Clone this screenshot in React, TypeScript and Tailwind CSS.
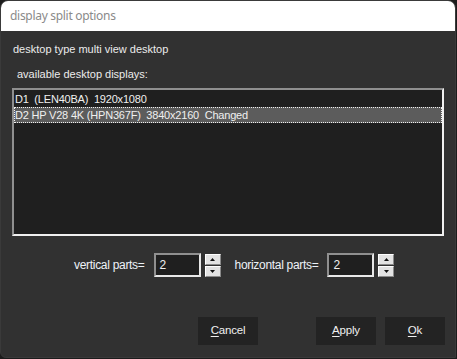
import React from "react";

function Spin() {
  return (
    <div className="flex flex-col gap-[1px] ml-[4px]">
      <div className="w-[16px] h-[11px] bg-[#e3e3e3] border-t border-l border-[#ffffff] border-r border-b border-r-[#8a8a8a] border-b-[#8a8a8a] flex items-center justify-center">
        <svg width="5" height="3" viewBox="0 0 5 3"><path d="M2.5 0 L5 3 L0 3 Z" fill="#111" /></svg>
      </div>
      <div className="w-[16px] h-[11px] bg-[#e3e3e3] border-t border-l border-[#ffffff] border-r border-b border-r-[#8a8a8a] border-b-[#8a8a8a] flex items-center justify-center">
        <svg width="5" height="3" viewBox="0 0 5 3"><path d="M0 0 L5 0 L2.5 3 Z" fill="#111" /></svg>
      </div>
    </div>
  );
}

function NumBox() {
  return (
    <div className="w-[47px] h-[24px] bg-[#1f1f1f] border-2 border-t-[#8f8f8f] border-l-[#8f8f8f] border-r-[#e8e8e8] border-b-[#e8e8e8] flex items-center pl-[4px] text-[12px] text-[#f0f0f0]">
      2
    </div>
  );
}

function Btn({ u, rest }: { u: string; rest: string }) {
  return (
    <div className="w-[60px] h-[28px] bg-[#232323] flex items-center justify-center text-[11.5px] text-[#f0f0f0] tracking-[-0.2px]">
      <span><span className="underline underline-offset-2">{u}</span>{rest}</span>
    </div>
  );
}

export default function App() {
  return (
    <div className="w-[457px] h-[359px] bg-[#1c1c1c]" style={{ fontFamily: "'Liberation Sans', sans-serif" }}>
      <div className="w-[456px] h-[358px] rounded-tr-[8px] rounded-tl-[8px] rounded-bl-[6px] overflow-hidden bg-[#313131] border border-[#3a3a3a] flex flex-col">
        <div className="h-[30px] bg-white flex items-center pl-[9px] text-[12px] text-[#8a8a8a]" style={{ fontFamily: "'Noto Sans', sans-serif" }}>
          <span className="tracking-[-0.3px]">display split options</span>
        </div>
        <div className="flex flex-col px-[11px] pt-[11px] text-[11px] text-[#ececec]">
          <div className="h-[14px] leading-[14px] pl-[1px]">desktop type multi view desktop</div>
          <div className="h-[14px] leading-[14px] mt-[11px] ml-[5px]">available desktop displays:</div>
          <div className="mt-[7px] h-[148px] border-2 border-t-[#8f8f8f] border-l-[#8f8f8f] border-r-[#f0f0f0] border-b-[#f0f0f0] bg-[#1f1f1f] pt-[2px] text-[11px] text-[#f0f0f0] tracking-[-0.2px]">
            <div className="h-[15px] leading-[15px] pl-[1px]">D1&nbsp;&nbsp;(LEN40BA)&nbsp;&nbsp;1920x1080</div>
            <div className="h-[16px] leading-[14px] bg-[#5c5c5c] border border-dotted border-[#f0f0f0]">D2 HP V28 4K (HPN367F)&nbsp;&nbsp;3840x2160&nbsp;&nbsp;Changed</div>
          </div>
          <div className="mt-[17px] flex items-center pl-[62px] text-[12px] text-[#eef2f8] tracking-[-0.3px]">
            <span className="mr-[9px]">vertical parts=</span>
            <NumBox />
            <Spin />
            <span className="ml-[14px] mr-[9px]">horizontal parts=</span>
            <NumBox />
            <Spin />
          </div>
          <div className="mt-[40px] flex items-center">
            <div className="ml-[186px]"><Btn u="C" rest="ancel" /></div>
            <div className="ml-[58px]"><Btn u="A" rest="pply" /></div>
            <div className="ml-[9px]"><Btn u="O" rest="k" /></div>
          </div>
        </div>
      </div>
    </div>
  );
}
